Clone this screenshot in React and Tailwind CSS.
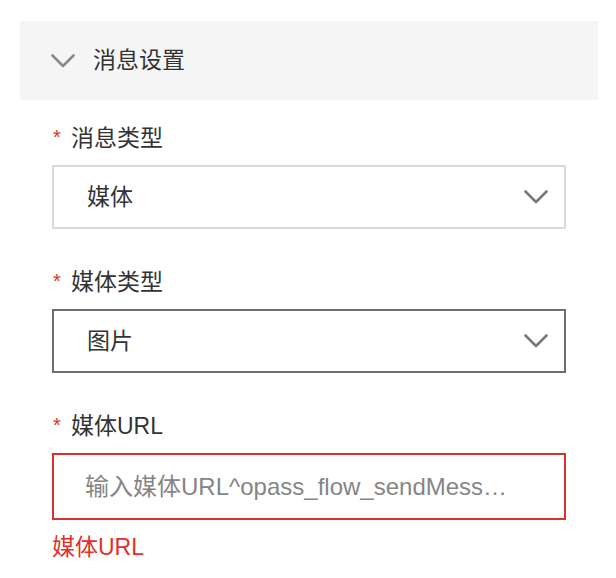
import React from "react";

const font = { fontFamily: '"Liberation Sans", "Noto Sans CJK SC", sans-serif' };

const Chevron = ({ className }) => (
  <svg viewBox="0 0 24 14" className={className} fill="none">
    <path d="M1.5 1.5 L12 12 L22.5 1.5" stroke="currentColor" strokeWidth="2.6" strokeLinecap="round" strokeLinejoin="round" />
  </svg>
);

const Label = ({ children }) => (
  <div className="h-[36px] flex items-center">
    <span className="w-[19px] pl-[1px] text-[#e0312b] text-[20px] leading-none -mt-[2px]">*</span>
    <span className="text-[23px] text-[#333333] leading-none">{children}</span>
  </div>
);

const Select = ({ value, focused }) => (
  <div
    className={`mt-[9px] h-[64px] border-2 flex items-center justify-between pl-[33px] pr-[16px] bg-white ${
      focused ? "border-[#6e6e6e]" : "border-[#dadada]"
    }`}
  >
    <span className="text-[23px] text-[#333333] leading-none">{value}</span>
    <Chevron className="w-[24px] h-[14px] text-[#7a7a7a]" />
  </div>
);

export default function App() {
  return (
    <div className="min-h-screen bg-white pl-[20px] pr-[18px] pt-[21px]" style={font}>
      <div className="h-[79px] bg-[#f5f5f5] flex items-center pl-[31px]">
        <Chevron className="w-[24px] h-[14px] text-[#8a8a8a]" />
        <span className="ml-[18px] text-[23px] text-[#333333] leading-none">消息设置</span>
      </div>

      <div className="px-[32px] pt-[20px]">
        <Label>消息类型</Label>
        <Select value="媒体" />

        <div className="mt-[35px]">
          <Label>媒体类型</Label>
          <Select value="图片" focused />
        </div>

        <div className="mt-[35px]">
          <Label>媒体URL</Label>
          <div className="mt-[9px] h-[67px] border-2 border-[#d9302b] flex items-center pl-[31px] pr-[12px]">
            <input
              className="w-full outline-none bg-transparent text-[24px] text-[#333333] placeholder:text-[#858585]"
              placeholder="输入媒体URL^opass_flow_sendMess…"
              style={font}
            />
          </div>
          <div className="h-[36px] mt-[9px] flex items-center text-[23px] text-[#e0312b] leading-none">媒体URL</div>
        </div>
      </div>
    </div>
  );
}
